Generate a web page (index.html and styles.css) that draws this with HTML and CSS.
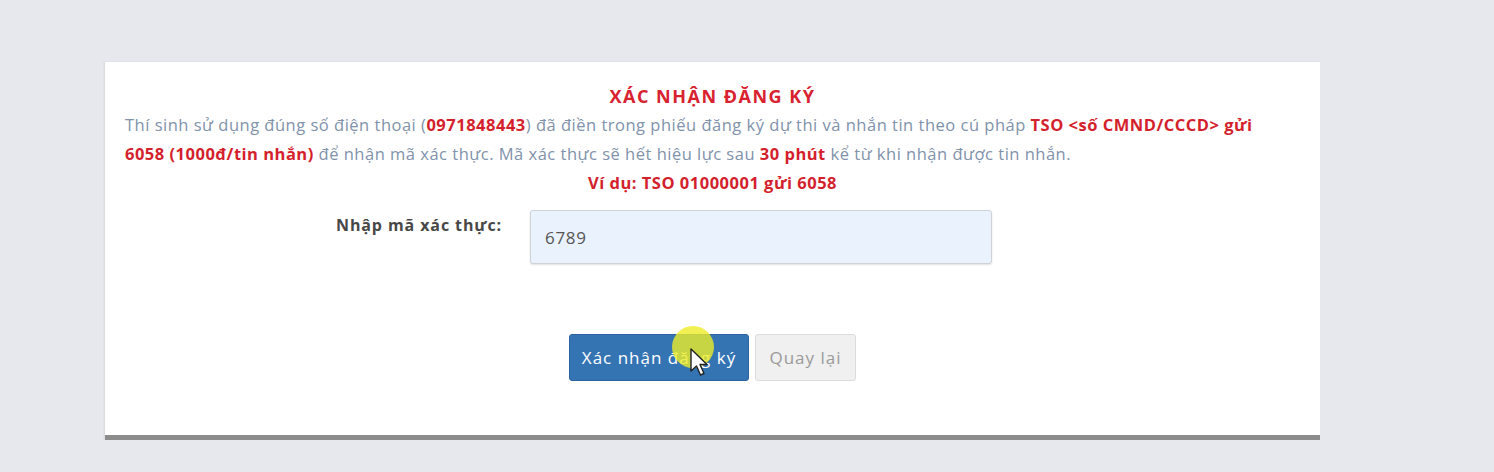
FILE: index.html
```html
<!DOCTYPE html>
<html lang="vi">
<head>
  <meta charset="UTF-8" />
  <meta name="viewport" content="width=device-width, initial-scale=1.0"/>
  <title>Xác nhận đăng ký</title>
  <link rel="stylesheet" href="styles.css">
</head>
<body>
  <div class="panel">
    <h2 class="title">XÁC NHẬN ĐĂNG KÝ</h2>
    <p class="note">
      Thí sinh sử dụng đúng số điện thoại (<b>0971848443</b>) đã điền trong phiếu đăng ký dự thi và nhắn tin theo cú pháp <b>TSO &lt;số CMND/CCCD&gt; gửi</b><br>
      <b>6058 (1000đ/tin nhắn)</b> để nhận mã xác thực. Mã xác thực sẽ hết hiệu lực sau <b>30 phút</b> kể từ khi nhận được tin nhắn.
    </p>
    <p class="example">Ví dụ: TSO 01000001 gửi 6058</p>

    <div class="form-row">
      <label for="code">Nhập mã xác thực:</label>
      <input id="code" type="text" value="6789">
    </div>

    <div class="actions">
      <button class="btn-primary">Xác nhận đăng ký</button>
      <button class="btn-default">Quay lại</button>
      <span class="cursor-mark">
        <svg width="22" height="30" viewBox="0 0 22 30">
          <path d="M2 2 L2 24 L7.5 19 L11.5 28 L15 26.5 L11 17.5 L18 17.5 Z" fill="#fff" stroke="#222" stroke-width="1.4" stroke-linejoin="round"/>
        </svg>
      </span>
    </div>
  </div>
</body>
</html>
```

FILE: styles.css
```css
body {
  margin: 0;
  background: #e6e8ed;
  font-family: 'Open Sans', 'Noto Sans', sans-serif;
  padding: 62px 0 0 105px;
}

.panel {
  width: 1215px;
  height: 378px;
  box-sizing: border-box;
  background: #fff;
  border-bottom: 5px solid #8c8c8c;
  box-shadow: -1px 0 2px rgba(0, 0, 0, 0.08);
  padding: 20px 20px 0 20px;
}

.title {
  margin: 0;
  text-align: center;
  color: #d8222f;
  font-size: 18px;
  letter-spacing: 1.5px;
  font-weight: 700;
  line-height: 28px;
}

.note {
  margin: 0;
  color: #8192ab;
  font-size: 16.5px;
  letter-spacing: 0.5px;
  line-height: 29px;
}

.note b,
.example {
  color: #d41f2d;
  font-weight: 700;
}

.example {
  margin: 0;
  text-align: center;
  font-size: 16.5px;
  letter-spacing: 0.5px;
  line-height: 29px;
}

.form-row {
  display: flex;
  align-items: flex-start;
  margin-top: 13px;
}

.form-row label {
  width: 377px;
  text-align: right;
  padding-top: 4px;
  font-size: 16px;
  letter-spacing: 0.9px;
  font-weight: 700;
  color: #474747;
}

.form-row input {
  margin-left: 28px;
  width: 462px;
  height: 54px;
  box-sizing: border-box;
  background: #eaf2fd;
  border: 1px solid #cfd3d8;
  border-radius: 3px;
  padding: 0 14px;
  font-family: inherit;
  font-size: 17px;
  letter-spacing: 0.7px;
  color: #555;
  box-shadow: 0 1px 2px rgba(0, 0, 0, 0.12);
}

.actions {
  position: relative;
  display: flex;
  justify-content: center;
  gap: 6px;
  margin-top: 70px;
}

.actions button {
  height: 47px;
  font-family: inherit;
  font-size: 17px;
  letter-spacing: 1px;
  border-radius: 3px;
  padding: 0;
}

.btn-primary {
  width: 180px;
  background: #3574b3;
  border: 1px solid #2b64a0;
  color: #fff;
}

.btn-default {
  width: 101px;
  background: #f0f0f0;
  border: 1px solid #dcdcdc;
  color: #9a9a9a;
}

.cursor-mark {
  position: absolute;
  left: 547px;
  top: -8px;
  width: 42px;
  height: 42px;
  border-radius: 50%;
  background: rgba(236, 236, 40, 0.8);
}

.cursor-mark svg {
  position: absolute;
  left: 17px;
  top: 21px;
}
```
